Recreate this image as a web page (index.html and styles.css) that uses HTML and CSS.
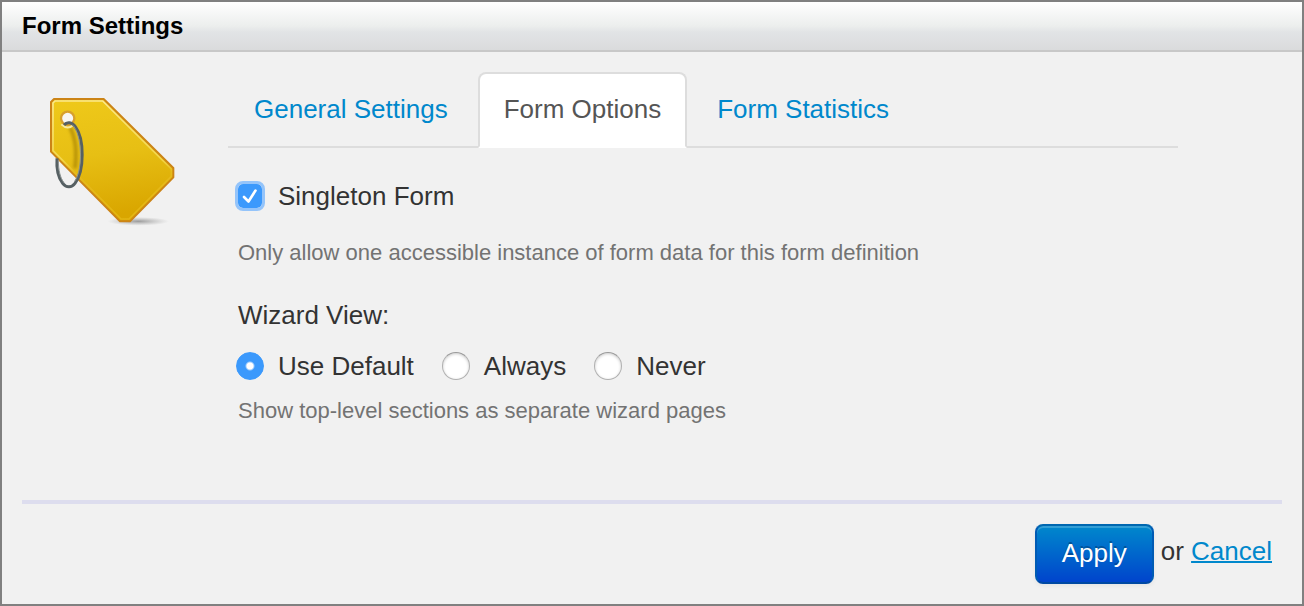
FILE: index.html
```html
<!DOCTYPE html>
<html lang="en">
<head>
<meta charset="utf-8">
<title>Form Settings</title>
<link rel="stylesheet" href="styles.css">
</head>
<body>
<form class="dialog">
  <h1 class="dialog-title">Form Settings</h1>
  <div class="dialog-body">
    <svg class="tag-icon" viewBox="54 48 390 396" aria-hidden="true">
      <defs>
        <linearGradient id="tag-fill" x1="0" y1="0" x2="0.15" y2="1">
          <stop offset="0" stop-color="#efc91a"/>
          <stop offset="0.5" stop-color="#e7bf14"/>
          <stop offset="1" stop-color="#d9a600"/>
        </linearGradient>
        <linearGradient id="tag-shine" x1="0" y1="0" x2="0" y2="1">
          <stop offset="0" stop-color="#fbe88c"/>
          <stop offset="0.5" stop-color="#f3d64c"/>
          <stop offset="0.6" stop-color="#e6ba1c"/>
          <stop offset="1" stop-color="#e3b512"/>
        </linearGradient>
        <radialGradient id="tag-shadow">
          <stop offset="0" stop-color="#777" stop-opacity="0.7"/>
          <stop offset="1" stop-color="#999" stop-opacity="0"/>
        </radialGradient>
        <filter id="soft" x="-50%" y="-50%" width="200%" height="200%"><feGaussianBlur stdDeviation="4"/></filter>
      </defs>
      <ellipse cx="325" cy="424" rx="92" ry="13" fill="url(#tag-shadow)"/>
      <path d="M72 57H221L430 264V292L300 424H270L63 215V66Z" fill="url(#tag-fill)" stroke="#cc8416" stroke-width="6" stroke-linejoin="round"/>
      <path d="M75 63H218L424 267V289L297 417H273L69 212V69Z" fill="none" stroke="url(#tag-shine)" stroke-width="5" stroke-linejoin="round"/>
      <path d="M120 142C138 175 142 210 135 265" fill="none" stroke="#9c7900" stroke-opacity="0.65" stroke-width="11" filter="url(#soft)"/>
      <circle cx="113" cy="115" r="20" fill="#f8f6f2" stroke="#d8a02c" stroke-width="7"/>
      <path d="M94 133Q113 152 133 133" fill="none" stroke="#f7e8a0" stroke-width="6"/>
      <path d="M102 135C111 124 126 126 136 140C163 176 164 272 135 310C125 323 109 324 98 310C84 292 79 264 81 235" fill="none" stroke="#566063" stroke-width="9"/>
      <path d="M127 134C157 163 159 270 134 304M85 241C85 270 91 295 102 308" fill="none" stroke="#8a9291" stroke-width="3"/>
    </svg>
    <div class="panel">
      <nav>
        <ul class="tabs">
          <li><a class="tab" href="#general">General Settings</a></li>
          <li><a class="tab tab-active" href="#options" aria-current="page">Form Options</a></li>
          <li><a class="tab" href="#statistics">Form Statistics</a></li>
        </ul>
      </nav>
      <div class="options">
        <label class="choice">
          <span class="check">
            <input class="check-input" type="checkbox" checked>
            <svg class="check-mark" viewBox="0 0 24 24" aria-hidden="true"><path d="M6 13L10.500 17.500L17.500 6.500" fill="none" stroke="#fff" stroke-width="2.600" stroke-linecap="round" stroke-linejoin="round"/></svg>
          </span>
          Singleton Form
        </label>
        <p class="help">Only allow one accessible instance of form data for this form definition</p>
        <fieldset class="wizard">
          <legend class="wizard-title">Wizard View:</legend>
          <div class="choices">
            <label class="choice"><input class="radio" type="radio" name="wizard" checked>Use Default</label>
            <label class="choice"><input class="radio" type="radio" name="wizard">Always</label>
            <label class="choice"><input class="radio" type="radio" name="wizard">Never</label>
          </div>
        </fieldset>
        <p class="help help-wizard">Show top-level sections as separate wizard pages</p>
      </div>
    </div>
  </div>
  <div class="actions">
    <button class="apply" type="button">Apply</button>
    <span class="alternative">or <a class="cancel" href="#cancel">Cancel</a></span>
  </div>
</form>
</body>
</html>
```
FILE: styles.css
```css
* {
  box-sizing: border-box;
}

body {
  margin: 0;
  background: #f1f1f1;
  color: #333;
  font: 26px/40px "Liberation Sans", Arial, sans-serif;
}

.dialog {
  display: flex;
  flex-direction: column;
  min-height: 100vh;
  border: 2px solid #808080;
}

.dialog-title {
  margin: 0;
  padding: 0 20px;
  border-bottom: 2px solid #c8c8c8;
  background: linear-gradient(#fff, #eceeed 50%, #e2e4e6 62%, #dadbdc);
  color: #000;
  font-size: 24px;
  line-height: 48px;
}

.dialog-body {
  display: flex;
  flex: 1;
  gap: 50px;
  padding: 20px 124px 20px 46px;
}

.tag-icon {
  flex: none;
  width: 130px;
  height: 132px;
  margin-top: 24px;
}

.panel {
  flex: 1;
}

.tabs {
  display: flex;
  gap: 4px;
  margin: 0;
  padding: 0;
  border-bottom: 2px solid #ddd;
  list-style: none;
}

.tab {
  display: block;
  margin-bottom: -2px;
  padding: 15px 24px 17px;
  border: 2px solid transparent;
  border-radius: 8px 8px 0 0;
  color: #08c;
  text-decoration: none;
}

.tab-active {
  border-color: #ddd #ddd #fff;
  background: #fff;
  color: #555;
}

.options {
  padding: 28px 8px 0;
}

.choice {
  display: flex;
  align-items: center;
  gap: 14px;
}

.check {
  display: grid;
  width: 28px;
  height: 28px;
  place-items: center;
}

.check-input,
.check-mark {
  grid-area: 1 / 1;
  width: 24px;
  height: 24px;
}

.check-input {
  margin: 0;
  border-radius: 5px;
  outline: 3px solid #94c4fa;
  background: #3b99fc;
  appearance: none;
}

.check-mark {
  z-index: 1;
  pointer-events: none;
}

.help {
  margin: 22px 2px 0;
  color: #737373;
  font-size: 22px;
  line-height: 30px;
}

.wizard {
  margin: 27px 0 0;
  padding: 0;
  border: 0;
}

.wizard-title {
  padding: 0 2px;
}

.choices {
  display: flex;
  gap: 28px;
  margin-top: 11px;
}

.radio {
  width: 28px;
  height: 28px;
  margin: 0;
  border: 1px solid #b0b0b0;
  border-top-color: #999;
  border-radius: 50%;
  background: #fff;
  box-shadow: inset 0 1px 3px #ccc;
  appearance: none;
}

.radio:checked {
  border-color: #3b99fc;
  background: radial-gradient(circle, #fff 3px, #3b99fc 5px);
  box-shadow: none;
}

.help-wizard {
  margin-top: 10px;
}

.actions {
  display: flex;
  justify-content: flex-end;
  gap: 7px;
  margin: 0 20px;
  padding: 20px 10px 20px 0;
  border-top: 4px solid #ddddee;
}

.apply {
  padding: 7px 25px 9px;
  border: 2px solid #0064ae;
  border-color: #0067b0 #005bb4 #0049a3;
  border-radius: 8px;
  background: linear-gradient(#08c, #04c);
  box-shadow: inset 0 2px 0 rgba(255, 255, 255, 0.2), 0 2px 4px rgba(0, 0, 0, 0.05);
  color: #fff;
  font: inherit;
  text-shadow: 0 -2px 0 rgba(0, 0, 0, 0.25);
}

.alternative {
  padding-top: 7px;
}

.cancel {
  color: #08c;
  text-decoration-thickness: 2px;
}
```
